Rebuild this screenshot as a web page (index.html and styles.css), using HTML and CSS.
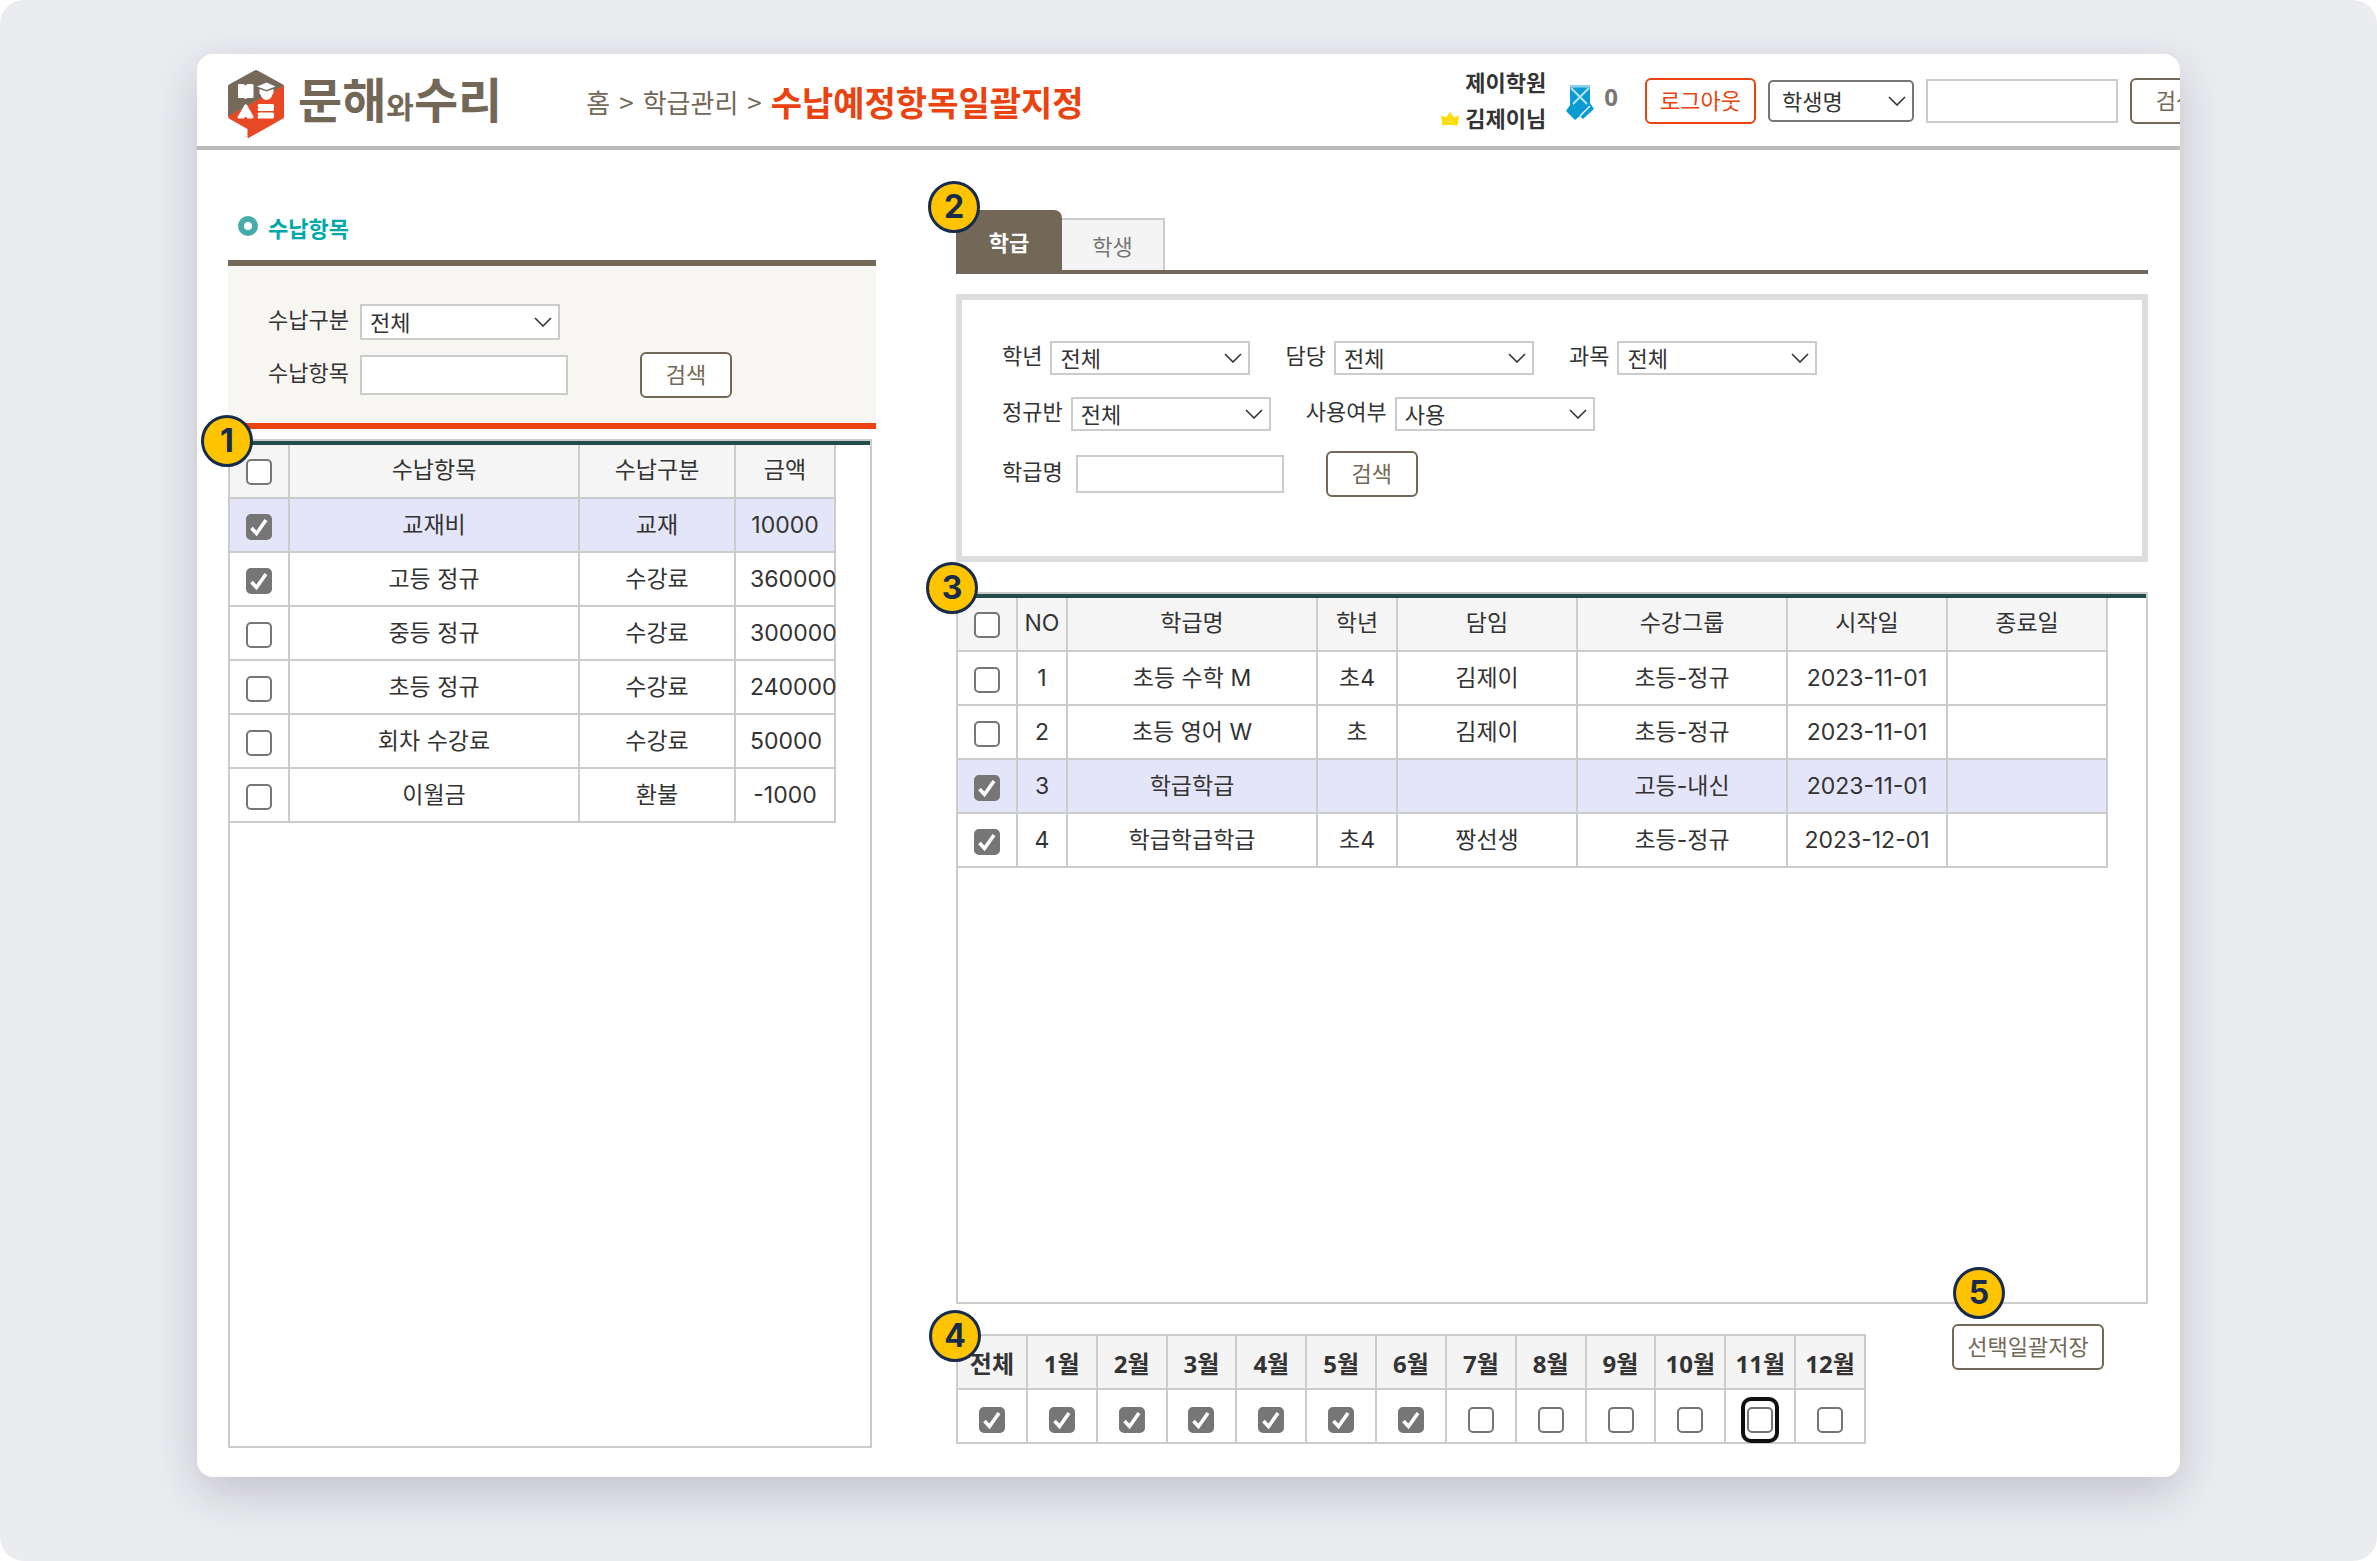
FILE: index.html
```html
<!DOCTYPE html>
<html lang="ko">
<head>
<meta charset="utf-8">
<title>수납예정항목일괄지정</title>
<link rel="stylesheet" href="styles.css">
</head>
<body>
<div class="stage">
<div class="card">
  <header class="header">
    <a class="logo" href="#" aria-label="문해와수리">
      <svg width="56" height="68" viewBox="0 0 56 68" aria-hidden="true">
        <path fill="#766959" d="M26.500.500Q28-.500 29.500.500L55 14.500Q56 15 56 16L0 47V16Q0 15 1 14.500Z"/>
        <path fill="#e94824" d="M56 15.500V47Q56 48 55 48.500L20.500 68H19.500V59L1 48.500 0 46.500Z"/>
        <g fill="#fff">
          <path d="M10 15Q10 14 11 14H15.500L17.500 15.500 19.500 14H24Q25.500 14 25.500 15V27Q25.500 28 24 28H19.500L17.500 29 15.500 28H11Q10 28 10 27Z"/>
          <path d="M29 16.500 38.500 12.500 47.500 16.500 38.500 20Z"/>
          <path d="M31.500 19 38.500 21.500 45.500 19V23Q45 24 44.500 24.500 43 29.500 38.500 30 34 29.500 32.500 24.500 31.500 24 31.500 23Z"/>
          <path d="M16.500 35Q17.700 33.500 19 35L25.500 46.500Q26 48.500 24 48.500H19.500L17.700 46.500 16 48.500H11Q9 48.500 9.800 46.500Z"/>
          <path d="M31 34H44.500Q46 34 46 35.500V39.500Q46 41 44.500 41H31Q29.500 41 29.500 39.500L30.500 37.500 29.500 35.500Q29.500 34 31 34Z"/>
          <path d="M31 42.500H44.500Q46 42.500 46 44V47Q46 48.500 44.500 48.500H31Q29.500 48.500 29.500 47L30.500 45.500 29.500 44Q29.500 42.500 31 42.500Z"/>
        </g>
      </svg>
      <span class="logo-text">문해<small>와</small>수리</span>
    </a>
    <nav class="crumbs" aria-label="현재 위치">
      <a href="#">홈</a><span>&gt;</span><a href="#">학급관리</a><span>&gt;</span><h1>수납예정항목일괄지정</h1>
    </nav>
    <div class="tools">
      <div class="user">
        <span>제이학원</span>
        <span class="user-name">
          <svg width="18" height="14" viewBox="0 0 18 14" aria-hidden="true"><path fill="#ffdc00" d="M0 3.500 5 5.500 9 0 13 5.500 18 3.500 16.500 13.500Q9 12 1.500 13.500Z"/><path stroke="#fff3a0" stroke-width="1" fill="none" d="M6 10Q9 9.400 12 10"/></svg>
          김제이님
        </span>
      </div>
      <div class="coupon">
        <svg width="28" height="36" viewBox="0 0 28 36" aria-hidden="true">
          <path fill="#0a9bd3" d="M4 2H24V18L28 24 17 34 14 31 9 35 0 26 4 20Z"/>
          <path fill="#8ed3ee" d="M4 0H24V2.500H4Z"/>
          <path stroke="#bfe6f6" stroke-width="1.800" fill="none" d="M5 3 21 19M23 3 7 19"/>
          <path stroke="#fff" stroke-width="1.200" fill="none" d="M14 31 24 21"/>
        </svg>
        <span>0</span>
      </div>
      <button class="btn btn-logout" type="button">로그아웃</button>
      <select class="select select-round" aria-label="검색 조건"><option>학생명</option></select>
      <input class="input input-top" type="text" aria-label="검색어">
      <button class="btn btn-search" type="button">검색</button>
    </div>
  </header>

  <main class="main">
    <section class="left">
      <h2 class="title"><svg width="20" height="20" viewBox="0 0 20 20" aria-hidden="true"><circle cx="10" cy="10" r="7" fill="none" stroke="#45acab" stroke-width="6"/></svg>수납항목</h2>
      <form class="filter">
        <div class="row">
          <label for="kind">수납구분</label>
          <select class="select select-tall" id="kind"><option>전체</option></select>
        </div>
        <div class="row">
          <label for="item">수납항목</label>
          <input class="input" id="item" type="text">
          <button class="btn btn-search btn-far" type="button">검색</button>
        </div>
      </form>
      <div class="list list-items">
        <span class="badge badge-items">1</span>
        <div class="list-body">
        <table class="grid">
          <colgroup><col class="w60"><col class="w290"><col class="w156"><col class="w100"></colgroup>
          <thead><tr><th class="pick"><input type="checkbox" aria-label="전체 선택"></th><th>수납항목</th><th>수납구분</th><th>금액</th></tr></thead>
          <tbody>
            <tr class="on"><td class="pick"><input type="checkbox" aria-label="교재비" checked></td><td>교재비</td><td>교재</td><td>10000</td></tr>
            <tr><td class="pick"><input type="checkbox" aria-label="고등 정규" checked></td><td>고등 정규</td><td>수강료</td><td>360000</td></tr>
            <tr><td class="pick"><input type="checkbox" aria-label="중등 정규"></td><td>중등 정규</td><td>수강료</td><td>300000</td></tr>
            <tr><td class="pick"><input type="checkbox" aria-label="초등 정규"></td><td>초등 정규</td><td>수강료</td><td>240000</td></tr>
            <tr><td class="pick"><input type="checkbox" aria-label="회차 수강료"></td><td>회차 수강료</td><td>수강료</td><td>50000</td></tr>
            <tr><td class="pick"><input type="checkbox" aria-label="이월금"></td><td>이월금</td><td>환불</td><td>-1000</td></tr>
          </tbody>
        </table>
        </div>
      </div>
    </section>

    <section class="right">
      <div class="tabs">
        <span class="badge badge-tab">2</span>
        <button class="tab tab-on" type="button">학급</button>
        <button class="tab" type="button">학생</button>
      </div>
      <form class="search">
        <div class="row">
          <label for="grade">학년</label><select class="select" id="grade"><option>전체</option></select>
          <label class="next" for="teacher">담당</label><select class="select" id="teacher"><option>전체</option></select>
          <label class="next" for="subject">과목</label><select class="select" id="subject"><option>전체</option></select>
        </div>
        <div class="row">
          <label for="regular">정규반</label><select class="select" id="regular"><option>전체</option></select>
          <label class="next" for="used">사용여부</label><select class="select" id="used"><option>사용</option></select>
        </div>
        <div class="row row-name">
          <label for="class-name">학급명</label><input class="input input-low" id="class-name" type="text">
          <button class="btn btn-search btn-near" type="button">검색</button>
        </div>
      </form>
      <div class="list list-classes">
        <span class="badge badge-classes">3</span>
        <div class="list-body">
        <table class="grid">
          <colgroup><col class="w60"><col class="w50"><col class="w250"><col class="w80"><col class="w180"><col class="w210"><col class="w160"><col class="w160"></colgroup>
          <thead><tr><th class="pick"><input type="checkbox" aria-label="전체 선택"></th><th class="tight">NO</th><th>학급명</th><th>학년</th><th>담임</th><th>수강그룹</th><th>시작일</th><th>종료일</th></tr></thead>
          <tbody>
            <tr><td class="pick"><input type="checkbox" aria-label="초등 수학 M"></td><td>1</td><td>초등 수학 M</td><td>초4</td><td>김제이</td><td>초등-정규</td><td>2023-11-01</td><td></td></tr>
            <tr><td class="pick"><input type="checkbox" aria-label="초등 영어 W"></td><td>2</td><td>초등 영어 W</td><td>초</td><td>김제이</td><td>초등-정규</td><td>2023-11-01</td><td></td></tr>
            <tr class="on"><td class="pick"><input type="checkbox" aria-label="학급학급" checked></td><td>3</td><td>학급학급</td><td></td><td></td><td>고등-내신</td><td>2023-11-01</td><td></td></tr>
            <tr><td class="pick"><input type="checkbox" aria-label="학급학급학급" checked></td><td>4</td><td>학급학급학급</td><td>초4</td><td>짱선생</td><td>초등-정규</td><td>2023-12-01</td><td></td></tr>
          </tbody>
        </table>
        </div>
      </div>
      <div class="actions">
        <div class="months-wrap">
          <span class="badge badge-months">4</span>
          <table class="months">
            <thead><tr><th>전체</th><th>1월</th><th>2월</th><th>3월</th><th>4월</th><th>5월</th><th>6월</th><th>7월</th><th>8월</th><th>9월</th><th>10월</th><th>11월</th><th>12월</th></tr></thead>
            <tbody><tr>
              <td><input type="checkbox" aria-label="전체" checked></td>
              <td><input type="checkbox" aria-label="1월" checked></td>
              <td><input type="checkbox" aria-label="2월" checked></td>
              <td><input type="checkbox" aria-label="3월" checked></td>
              <td><input type="checkbox" aria-label="4월" checked></td>
              <td><input type="checkbox" aria-label="5월" checked></td>
              <td><input type="checkbox" aria-label="6월" checked></td>
              <td><input type="checkbox" aria-label="7월"></td>
              <td><input type="checkbox" aria-label="8월"></td>
              <td><input type="checkbox" aria-label="9월"></td>
              <td><input type="checkbox" aria-label="10월"></td>
              <td><label class="focused"><input type="checkbox" aria-label="11월"></label></td>
              <td><input type="checkbox" aria-label="12월"></td>
            </tr></tbody>
          </table>
        </div>
        <div class="save">
          <span class="badge badge-save">5</span>
          <button class="btn btn-save" type="button">선택일괄저장</button>
        </div>
      </div>
    </section>
  </main>
</div>
</div>
</body>
</html>
```
FILE: styles.css
```css
:root {
  --brown: #736757;
  --orange: #ea4310;
  --line: #ccc;
  --ink: #333;
}

* { box-sizing: border-box; }

body {
  margin: 0;
  background: #fff;
  color: var(--ink);
  font: 22px/32px "Noto Sans CJK KR", sans-serif;
}

h1, h2 { margin: 0; }
a { color: inherit; text-decoration: none; }
svg { display: block; flex: none; }

button, input, select { font: inherit; color: inherit; margin: 0; }

.stage {
  min-height: 100vh;
  padding: 54px 197px 84px;
  border-radius: 24px;
  background: #ebecf0;
}

.card {
  border-radius: 16px;
  background: #fff;
  box-shadow: 0 16px 48px rgba(30, 30, 50, .2);
}

/* Header */
.header {
  display: flex;
  align-items: center;
  height: 96px;
  padding: 2px 0 0 31px;
  overflow: hidden;
  border-bottom: 4px solid #bbb;
  border-radius: 16px 16px 0 0;
}

.logo {
  display: flex;
  align-items: center;
  gap: 14px;
  padding-top: 6px;
  margin-right: 84px;
}

.logo-text {
  color: var(--brown);
  font-size: 48px;
  line-height: 64px;
  font-weight: 700;
  padding-bottom: 6px;
}

.logo-text small { font-size: 30px; }

.crumbs {
  display: flex;
  align-items: center;
  gap: 9px;
  padding-top: 2px;
  color: var(--brown);
  font-size: 26px;
  line-height: 40px;
  white-space: nowrap;
}

.crumbs h1 {
  color: var(--orange);
  font-size: 34px;
  line-height: 40px;
  font-weight: 700;
}

.tools {
  display: flex;
  align-items: center;
  gap: 12px;
  flex: none;
  margin-left: auto;
  margin-right: -42px;
}

.user {
  display: flex;
  flex-direction: column;
  align-items: flex-end;
  font-weight: 700;
  line-height: 36px;
  padding-bottom: 4px;
  margin-right: 8px;
}

.user-name { display: flex; align-items: center; gap: 6px; }
.user-name svg { margin-top: 4px; }

.coupon {
  display: flex;
  align-items: center;
  gap: 10px;
  padding-top: 4px;
  margin-right: 15px;
  color: #777;
  font: 700 24px/32px "Noto Sans", sans-serif;
}

.coupon span { padding-bottom: 12px; }

/* Controls */
.btn {
  height: 46px;
  padding: 0 0 4px;
  border: 2px solid var(--brown);
  border-radius: 6px;
  background: #fff;
  color: var(--brown);
  line-height: 32px;
  flex: none;
}

.btn-search { width: 92px; }
.btn-far { margin-left: 72px; }
.btn-near { margin-left: 42px; }
.btn-logout { width: 111px; border-color: var(--orange); color: var(--orange); }
.btn-save { width: 152px; }

.select {
  appearance: none;
  width: 200px;
  height: 34px;
  padding: 0 32px 2px 8px;
  border: 2px solid var(--line);
  border-radius: 0;
  line-height: 28px;
  background: #fff url("data:image/svg+xml,%3Csvg xmlns='http://www.w3.org/2000/svg' width='18' height='10' viewBox='0 0 18 10'%3E%3Cpath d='M1 1l8 8 8-8' fill='none' stroke='%23333' stroke-width='1.600'/%3E%3C/svg%3E") no-repeat right 6px center;
}

.select-tall { height: 36px; }

.select-round {
  width: 146px;
  height: 42px;
  padding-left: 12px;
  border-color: #777;
  border-radius: 5px;
}

.input {
  width: 208px;
  height: 40px;
  border: 2px solid var(--line);
  background: #fff;
}

.input-top { width: 192px; height: 44px; }
.input-low { height: 38px; margin-left: 5px; }

input[type="checkbox"] {
  appearance: none;
  display: block;
  width: 26px;
  height: 26px;
  margin: 0 auto;
  border: 2px solid #767676;
  border-radius: 5px;
  background: #fff;
}

input[type="checkbox"]:checked {
  background: #767676 url("data:image/svg+xml,%3Csvg xmlns='http://www.w3.org/2000/svg' width='22' height='22' viewBox='0 0 22 22'%3E%3Cpath d='M3.500 12l5 5.500L18 4' fill='none' stroke='%23fff' stroke-width='3.600'/%3E%3C/svg%3E") center no-repeat;
}

.badge {
  position: absolute;
  z-index: 2;
  width: 52px;
  height: 52px;
  border: 3px solid #172b4d;
  border-radius: 50%;
  background: #ffc400;
  color: #172b4d;
  font: 700 32px/46px Inter, sans-serif;
  text-align: center;
}

.badge-items { left: -29px; top: -26px; }
.badge-tab { left: -28px; top: -29px; }
.badge-classes { left: -32px; top: -32px; }
.badge-months { left: -27px; top: -24px; }
.badge-save { left: 1px; top: -57px; }

/* Columns */
.main {
  display: grid;
  grid-template-columns: 648fr 1192fr;
  gap: 80px;
  padding: 60px 32px 29px 31px;
}

.left, .right { display: flex; flex-direction: column; min-width: 0; }

.title {
  display: flex;
  align-items: center;
  gap: 10px;
  height: 50px;
  padding: 0 0 16px 10px;
  color: #00a9a8;
  font-size: 22px;
}

.title svg { margin-bottom: 2px; }

.row { display: flex; align-items: center; }
.row label { margin-right: 8px; padding-bottom: 8px; line-height: 26px; }
.row .next { margin-left: 35px; }

.filter {
  display: flex;
  flex-direction: column;
  gap: 12px;
  padding: 38px 0 25px 40px;
  border-top: 6px solid var(--brown);
  border-bottom: 6px solid var(--orange);
  background: #f7f6f2;
}

.filter .row label { margin-right: 11px; }

.list {
  position: relative;
  border: 2px solid var(--line);
}

.list-items { flex: 1; margin: 10px 4px 0 0; }
.list-classes { margin-top: 30px; min-height: 712px; }
.list-body { border-top: 4px solid #234d4a; }

.grid {
  table-layout: fixed;
  width: min-content;
  border-spacing: 0;
  font: 23px/32px Inter, "Noto Sans CJK KR", sans-serif;
  text-align: center;
  white-space: nowrap;
}

.grid th, .grid td {
  height: 54px;
  padding: 0 14px;
  border-right: 2px solid var(--line);
  border-bottom: 2px solid var(--line);
  font-weight: 400;
}

.grid th { padding-bottom: 2px; background: #f5f5f5; }
.grid .on td { background: #e5e5f9; }
.grid .tight { padding: 0 0 2px; }
.grid th.pick { padding: 2px 0 0; }
.grid td.pick { padding: 4px 0 0; }

.w50 { width: 50px; }
.w60 { width: 60px; }
.w80 { width: 80px; }
.w100 { width: 100px; }
.w156 { width: 156px; }
.w160 { width: 160px; }
.w180 { width: 180px; }
.w210 { width: 210px; }
.w250 { width: 250px; }
.w290 { width: 290px; }

/* Tabs */
.tabs {
  position: relative;
  display: flex;
  align-items: flex-end;
  height: 64px;
  border-bottom: 4px solid var(--brown);
}

.tab {
  width: 103px;
  height: 52px;
  padding: 0;
  border: solid var(--line);
  border-width: 2px 2px 0 0;
  background: #f4f4f4;
  color: #777;
}

.tab-on {
  width: 106px;
  height: 60px;
  padding-top: 2px;
  border: 0;
  border-radius: 8px 8px 0 0;
  background: var(--brown);
  color: #fff;
  font-weight: 700;
}

.search {
  display: flex;
  flex-direction: column;
  gap: 22px;
  margin-top: 20px;
  padding: 41px 40px 59px;
  border: 6px solid #ddd;
}

.row-name { margin-top: -2px; }

/* Bottom bar */
.actions {
  display: flex;
  justify-content: space-between;
  align-items: flex-start;
  padding: 20px 44px 4px 0;
}

.months-wrap, .save { position: relative; }
.months-wrap { margin-top: 10px; }

.months {
  table-layout: fixed;
  width: 910px;
  border-collapse: collapse;
  font: 24px/32px "Noto Sans", "Noto Sans CJK KR", sans-serif;
}

.months th, .months td {
  height: 54px;
  padding: 4px 0 0;
  border: 2px solid var(--line);
}

.months th { background: #f4f4f4; font-weight: 700; }
.months td { padding-top: 8px; }

.focused {
  display: block;
  width: 30px;
  height: 38px;
  margin: -6px auto;
  padding: 6px 2px;
  border-radius: 6px;
  outline: 4px solid #101010;
  box-shadow: 0 0 0 6px #fff;
}
```
